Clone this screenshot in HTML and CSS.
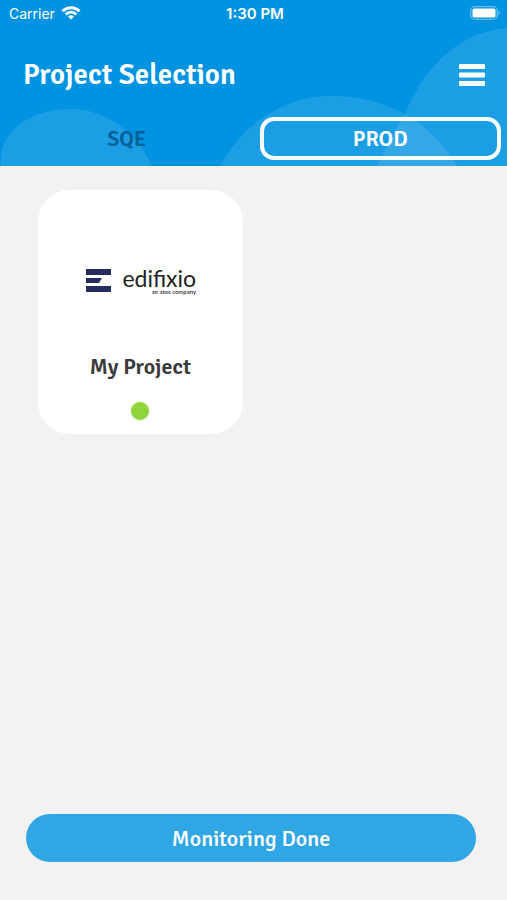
FILE: index.html
```html
<!DOCTYPE html>
<html lang="en">
<head>
    <meta charset="UTF-8">
    <meta name="viewport" content="width=device-width, initial-scale=1.0">
    <title>Project Selection</title>
    <link rel="stylesheet" href="styles.css">
</head>
<body>
    <header class="header">
        <svg class="header-shapes" viewBox="0 0 507 166" preserveAspectRatio="none" aria-hidden="true">
            <path d="M1 166C-3 130 33 109 69 109C107 109 136 132 152 166Z"/>
            <path d="M220 166C244 122 286 96 331 96C386 96 430 121 457 166Z"/>
            <path d="M377 166C387 148 394 131 405 114C424 67 460 31 507 28V166Z"/>
        </svg>

        <div class="status-bar">
            <div class="carrier">
                <span>Carrier</span>
                <svg width="20" height="14" viewBox="0 0 20 14" aria-hidden="true">
                    <g fill="none" stroke="#fff" stroke-width="3">
                        <path d="M1.5 5.2C6.3 .5 13.7 .5 18.5 5.2"/>
                        <path d="M4.7 8.5C7.8 5.6 12.2 5.6 15.3 8.5"/>
                    </g>
                    <path d="M7 10.5Q10 8.2 13 10.5L10 13.6Z" fill="#fff"/>
                </svg>
            </div>
            <span class="time">1:30 PM</span>
            <svg class="battery" width="31" height="14" viewBox="0 0 31 14" aria-hidden="true">
                <rect x=".7" y=".7" width="26.6" height="12.6" rx="4" fill="none" stroke="#fff" stroke-opacity=".4" stroke-width="1.3"/>
                <rect x="2.5" y="2.5" width="23" height="9" rx="1.5" fill="#fff"/>
                <path d="M28.5 4.5Q31 7 28.5 9.5Z" fill="#fff" fill-opacity=".5"/>
            </svg>
        </div>

        <div class="title-bar">
            <h1>Project Selection</h1>
            <button class="menu-button" type="button" aria-label="Menu">
                <svg width="26" height="22" viewBox="0 0 26 22" aria-hidden="true">
                    <rect width="26" height="5" rx="1"/>
                    <rect y="8.5" width="26" height="5" rx="1"/>
                    <rect y="17" width="26" height="5" rx="1"/>
                </svg>
            </button>
        </div>

        <nav class="tabs">
            <button class="tab" type="button">SQE</button>
            <button class="tab active" type="button">PROD</button>
        </nav>
    </header>

    <main class="projects">
        <a class="project-card" href="#">
            <div class="logo">
                <svg width="25" height="23" viewBox="0 0 25 23" aria-hidden="true">
                    <path d="M0 0H25V6H0ZM0 9H16L13 14H0ZM0 17H25V23H0Z" fill="#252c60"/>
                </svg>
                <div class="logo-text">
                    <span class="logo-name">edifixio</span>
                    <span class="logo-tagline">an atos company</span>
                </div>
            </div>
            <h2>My Project</h2>
            <span class="status-dot"></span>
        </a>
    </main>

    <footer class="footer">
        <button class="monitoring-button" type="button">Monitoring Done</button>
    </footer>
</body>
</html>
```
FILE: styles.css
```css
* {
    box-sizing: border-box;
}

body {
    display: flex;
    flex-direction: column;
    min-height: 100vh;
    margin: 0;
    background-color: #f2f2f2;
    color: #3a3a3a;
    font-family: Signika, Roboto, "Noto Sans", sans-serif;
}

h1,
h2 {
    margin: 0;
}

button {
    padding: 0;
    border: none;
    background: none;
    font-family: inherit;
    cursor: pointer;
}

.header {
    position: relative;
    padding-bottom: 6px;
    background-color: #0093e1;
    color: white;
}

.header-shapes {
    position: absolute;
    inset: 0;
    width: 100%;
    height: 100%;
    fill: rgba(255, 255, 255, 0.11);
}

.status-bar,
.title-bar,
.tabs {
    position: relative;
}

.status-bar {
    display: grid;
    grid-template-columns: 1fr auto 1fr;
    align-items: center;
    height: 26px;
    padding: 0 6px 0 9px;
    font-family: Inter, "Liberation Sans", sans-serif;
    font-size: 14px;
}

.carrier {
    display: flex;
    align-items: center;
    gap: 6px;
}

.time {
    font-size: 15px;
    font-weight: 600;
}

.battery {
    justify-self: end;
}

.title-bar {
    display: flex;
    justify-content: space-between;
    align-items: center;
    height: 91px;
    padding: 6px 22px 0 23px;
}

.title-bar h1 {
    font-size: 29px;
    font-weight: 600;
}

.menu-button {
    display: flex;
    fill: white;
}

.tabs {
    display: flex;
}

.tab {
    flex: 1;
    height: 43px;
    margin: 0 6px;
    border: 4px solid transparent;
    border-radius: 14px;
    color: #006198;
    font-size: 22px;
    font-weight: 600;
}

.tab.active {
    border-color: white;
    color: white;
}

.projects {
    display: grid;
    grid-template-columns: repeat(2, 1fr);
    gap: 24px;
    padding: 24px 36px 24px 38px;
}

.project-card {
    display: flex;
    flex-direction: column;
    align-items: center;
    padding: 78px 14px 14px;
    border-radius: 32px;
    background-color: white;
    color: inherit;
    text-decoration: none;
}

.logo {
    display: flex;
    align-items: flex-start;
    gap: 11px;
    height: 85px;
    padding-left: 2px;
    color: #222;
}

.logo svg {
    margin-top: 1px;
}

.logo-text {
    display: flex;
    flex-direction: column;
    font-family: Lato, sans-serif;
}

.logo-name {
    font-size: 23px;
    line-height: 21px;
}

.logo-tagline {
    align-self: flex-end;
    font-size: 6px;
    font-weight: 500;
    line-height: 6px;
}

.project-card h2 {
    font-size: 22px;
    font-weight: 600;
    line-height: 28px;
}

.status-dot {
    width: 18px;
    height: 18px;
    margin-top: 21px;
    border-radius: 50%;
    background-color: #8fd43a;
    box-shadow: 0 0 2px #c9efaa;
}

.footer {
    margin-top: auto;
    padding: 0 31px 38px 26px;
}

.monitoring-button {
    width: 100%;
    height: 48px;
    border-radius: 24px;
    background-color: #30a6e5;
    color: white;
    font-size: 22px;
    font-weight: 500;
}
```
